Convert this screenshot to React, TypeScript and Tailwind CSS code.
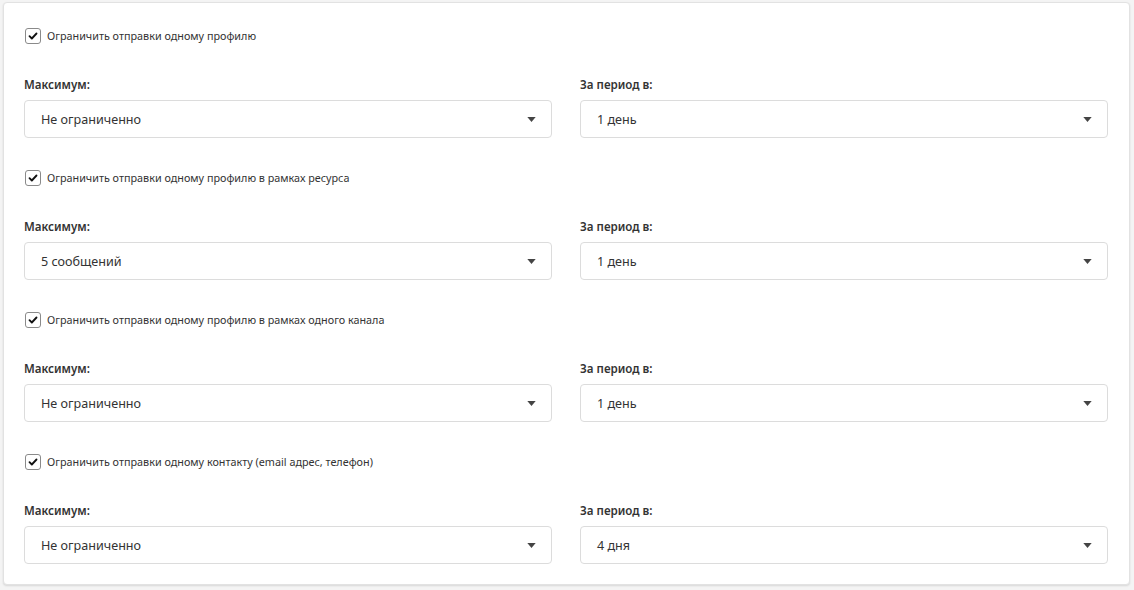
const sections = [
  { title: "Ограничить отправки одному профилю", max: "Не ограниченно", period: "1 день" },
  { title: "Ограничить отправки одному профилю в рамках ресурса", max: "5 сообщений", period: "1 день" },
  { title: "Ограничить отправки одному профилю в рамках одного канала", max: "Не ограниченно", period: "1 день" },
  { title: "Ограничить отправки одному контакту (email адрес, телефон)", max: "Не ограниченно", period: "4 дня" },
];

function Check() {
  return (
    <span className="flex h-4 w-4 items-center justify-center rounded-[3px] border border-[#8a8a8a] bg-white">
      <svg viewBox="0 0 12 12" className="h-[10px] w-[10px]">
        <path d="M1.8 6.2 L4.6 9 L10.2 3" fill="none" stroke="#111" strokeWidth="2.2" strokeLinecap="round" strokeLinejoin="round" />
      </svg>
    </span>
  );
}

function Select({ label, value }: { label: string; value: string }) {
  return (
    <div className="flex flex-col">
      <div className="mb-[7px] h-4 text-[11.6px] font-semibold leading-4 text-[#333]">{label}</div>
      <div className="flex h-[38px] items-center justify-between rounded-[4px] border border-[#dcdcdc] bg-white pl-4 pr-[15px]">
        <span className="pt-[2px] text-[12.6px] text-[#333]">{value}</span>
        <svg viewBox="0 0 10 6" className="h-[5px] w-[9px]">
          <path d="M0 0 H10 L5 6 Z" fill="#444" />
        </svg>
      </div>
    </div>
  );
}

export default function App() {
  return (
    <div className="min-h-[590px] bg-[#f4f4f4] px-[3px] pt-[2px]" style={{ fontFamily: '"Noto Sans", "Open Sans", sans-serif' }}>
      <div className="w-[1127px] rounded-[4px] border border-[#e2e2e2] bg-white px-[20px] pb-[20px] pt-[25px] shadow-[0_1px_2px_rgba(0,0,0,0.12)]">
        {sections.map((s, i) => (
          <div key={i} className={i > 0 ? "mt-[32px]" : ""}>
            <label className="flex h-4 items-center gap-[6px] pl-px">
              <Check />
              <span className="text-[10.8px] text-[#333]">{s.title}</span>
            </label>
            <div className="mt-[33px] grid grid-cols-2 gap-[28px] pr-[1px]">
              <Select label="Максимум:" value={s.max} />
              <Select label="За период в:" value={s.period} />
            </div>
          </div>
        ))}
      </div>
    </div>
  );
}
